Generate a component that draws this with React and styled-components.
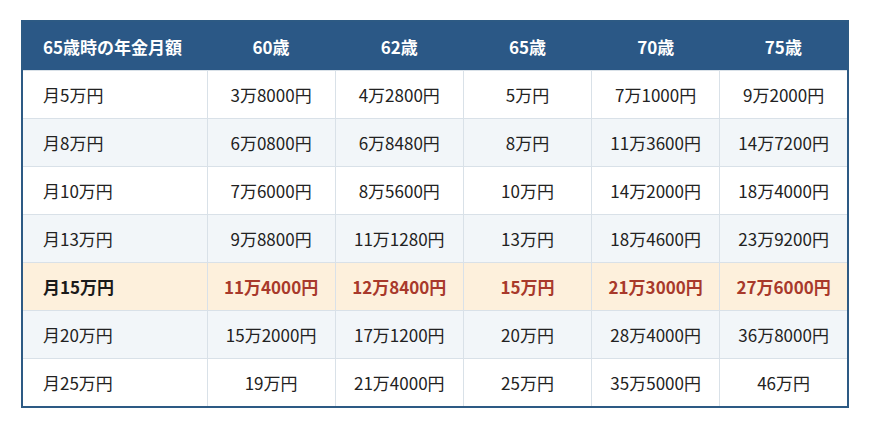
import styled, { createGlobalStyle } from "styled-components";

const GlobalStyle = createGlobalStyle`
  body {
    margin: 0;
    background: #ffffff;
    font-family: "Noto Sans CJK JP", "Noto Sans", sans-serif;
  }
`;

const Page = styled.div`
  padding: 20px 0 0 21px;
`;

const Table = styled.table`
  width: 828px;
  border-collapse: collapse;
  border: 2px solid #2d5a84;
  table-layout: fixed;
  font-size: 17px;
  color: #222;
`;

const HeadCell = styled.th`
  height: 48px;
  padding: 0;
  background: #2b5886;
  color: #ffffff;
  font-weight: 700;
  text-align: ${(p) => (p.$first ? "left" : "center")};
  padding-left: ${(p) => (p.$first ? "20px" : "0")};
  width: ${(p) => (p.$first ? "164px" : "auto")};
`;

const Row = styled.tr`
  background: ${(p) =>
    p.$highlight ? "#fdf0dc" : p.$odd ? "#f2f6f9" : "#ffffff"};
`;

const Cell = styled.td`
  height: 47px;
  padding: 0;
  border: 1px solid #d9e1e8;
  text-align: ${(p) => (p.$first ? "left" : "center")};
  padding-left: ${(p) => (p.$first ? "20px" : "0")};
  font-weight: ${(p) => (p.$highlight ? 700 : 400)};
  color: ${(p) =>
    p.$highlight ? (p.$first ? "#1a1a1a" : "#a8392b") : "#222222"};
`;

const ages = ["60歳", "62歳", "65歳", "70歳", "75歳"];

const rows = [
  ["月5万円", "3万8000円", "4万2800円", "5万円", "7万1000円", "9万2000円"],
  ["月8万円", "6万0800円", "6万8480円", "8万円", "11万3600円", "14万7200円"],
  ["月10万円", "7万6000円", "8万5600円", "10万円", "14万2000円", "18万4000円"],
  ["月13万円", "9万8800円", "11万1280円", "13万円", "18万4600円", "23万9200円"],
  ["月15万円", "11万4000円", "12万8400円", "15万円", "21万3000円", "27万6000円"],
  ["月20万円", "15万2000円", "17万1200円", "20万円", "28万4000円", "36万8000円"],
  ["月25万円", "19万円", "21万4000円", "25万円", "35万5000円", "46万円"],
];

export default function App() {
  return (
    <>
      <GlobalStyle />
      <Page>
        <Table>
          <thead>
            <tr>
              <HeadCell $first>65歳時の年金月額</HeadCell>
              {ages.map((a) => (
                <HeadCell key={a}>{a}</HeadCell>
              ))}
            </tr>
          </thead>
          <tbody>
            {rows.map((r, i) => {
              const hl = i === 4;
              return (
                <Row key={r[0]} $odd={i % 2 === 1} $highlight={hl}>
                  {r.map((v, j) => (
                    <Cell key={j} $first={j === 0} $highlight={hl}>
                      {v}
                    </Cell>
                  ))}
                </Row>
              );
            })}
          </tbody>
        </Table>
      </Page>
    </>
  );
}
